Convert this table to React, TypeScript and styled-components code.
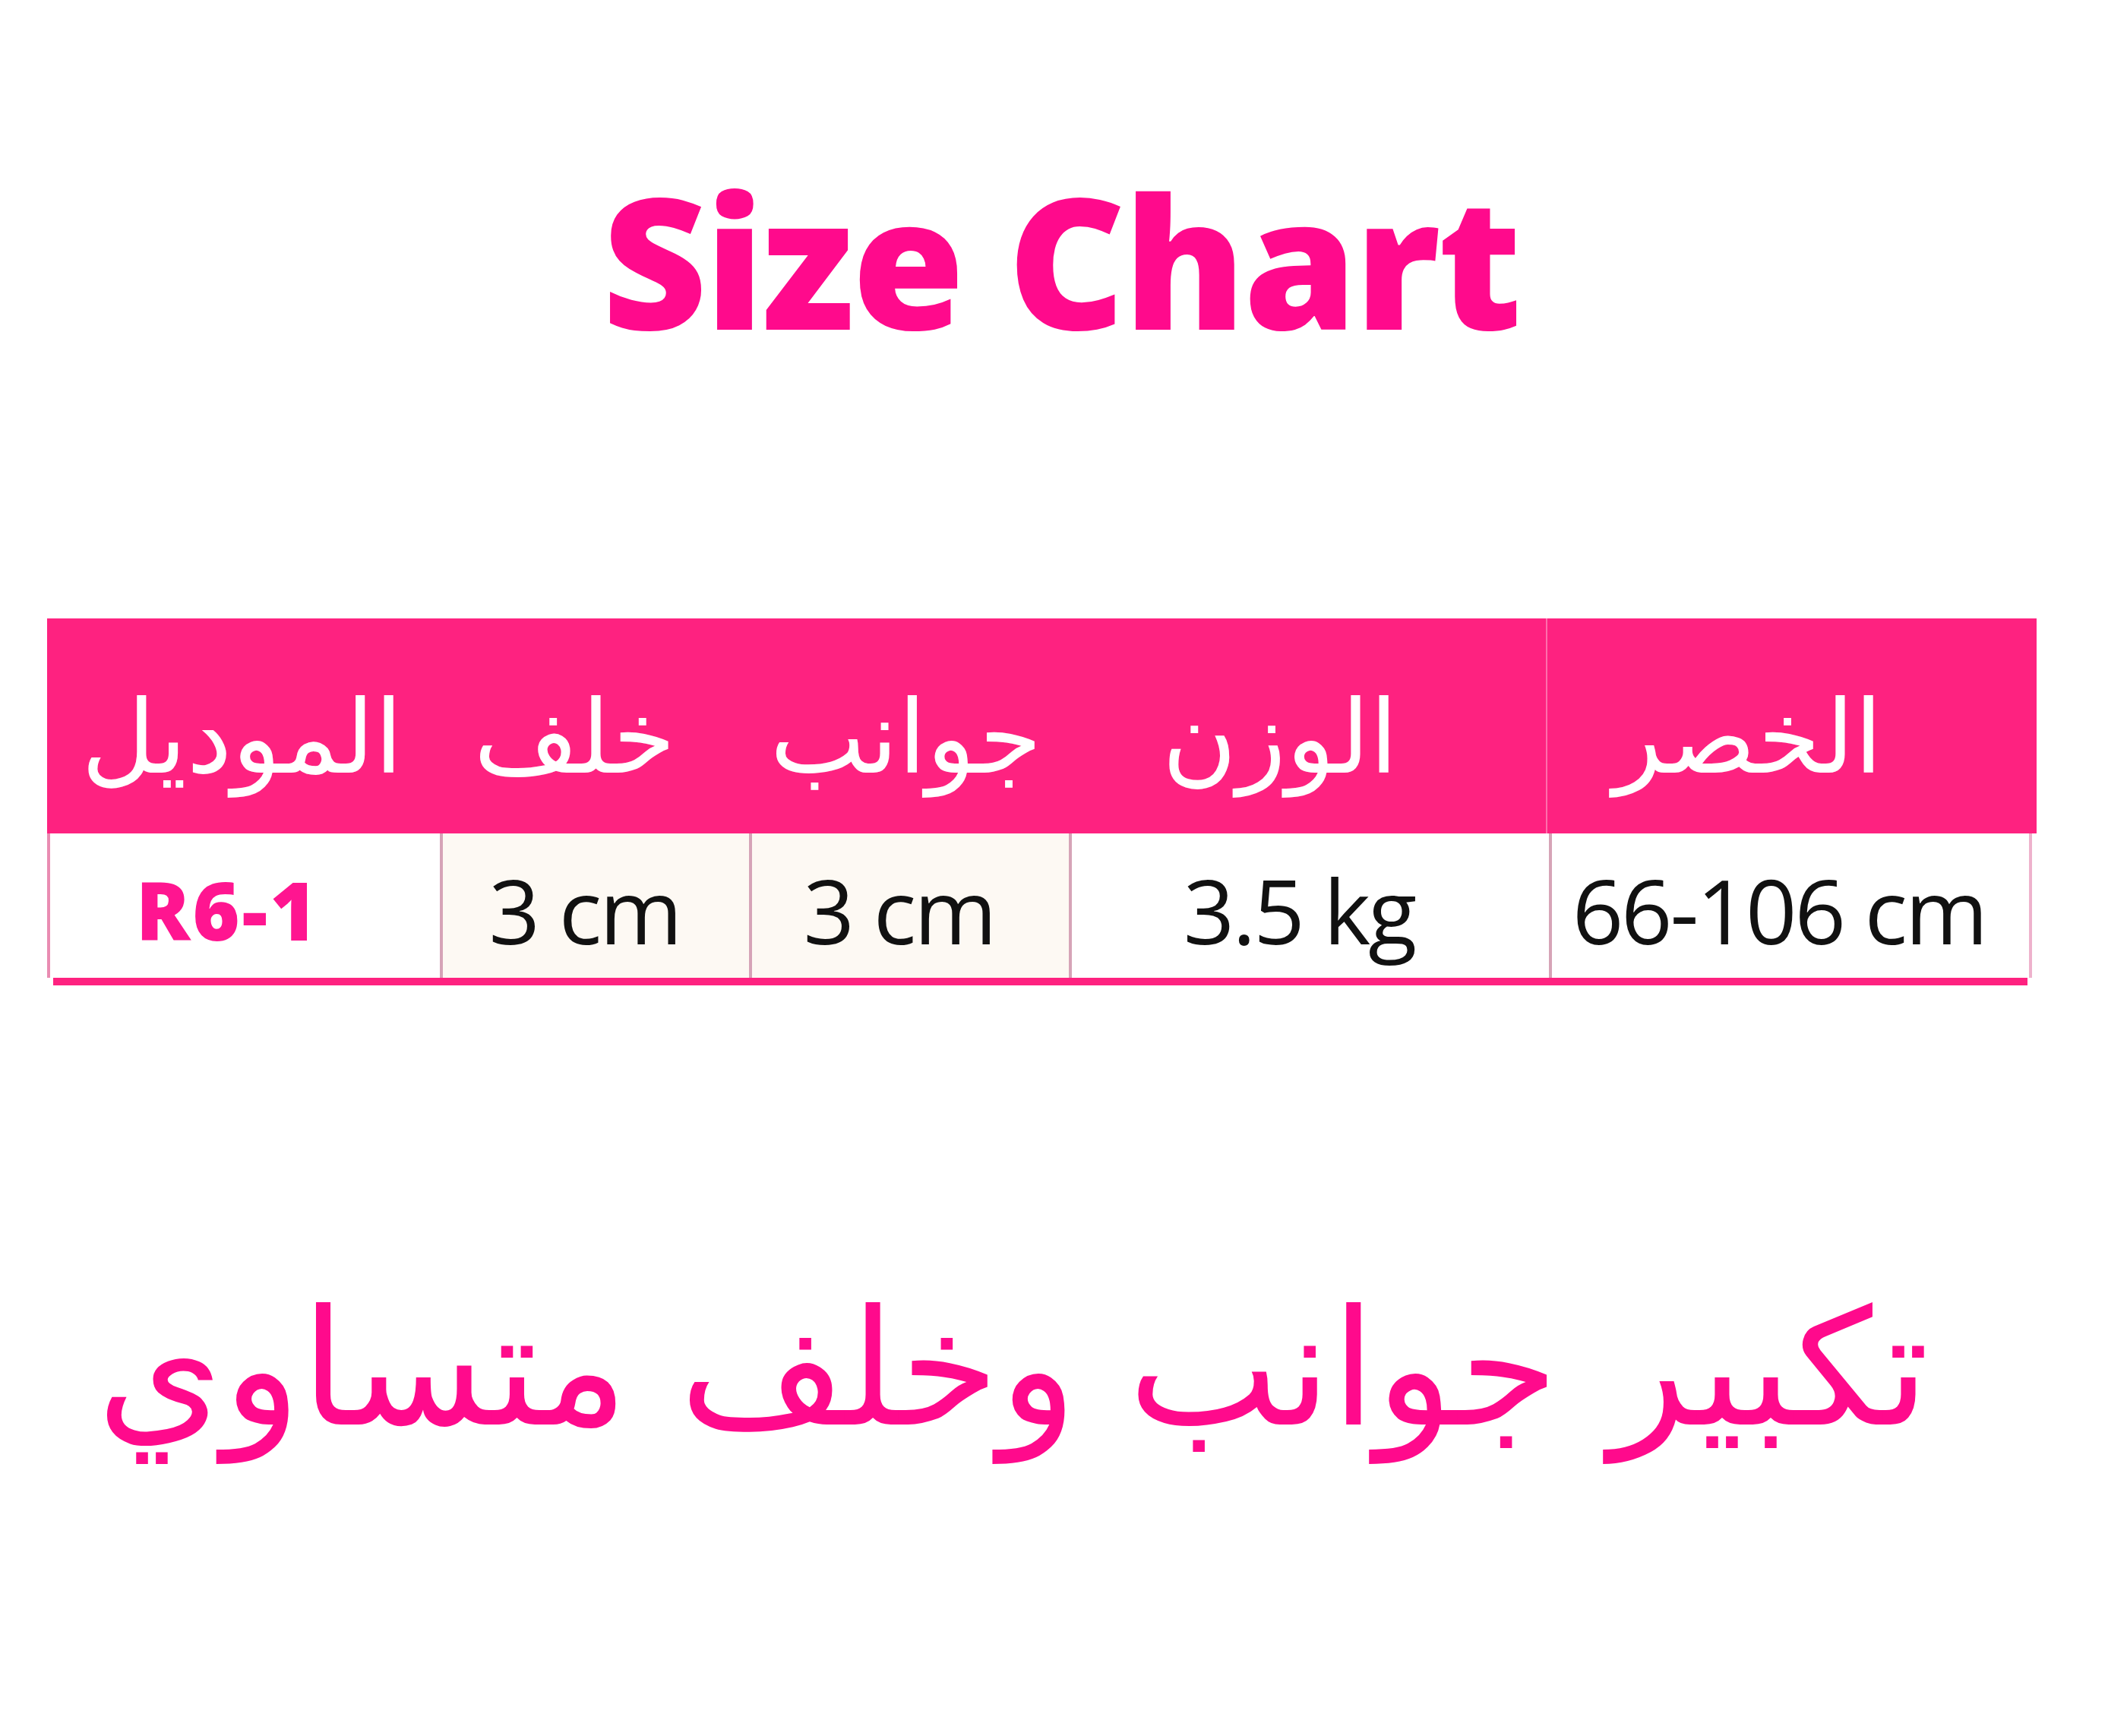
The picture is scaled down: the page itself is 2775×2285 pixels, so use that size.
import React from 'react';
import styled, { createGlobalStyle } from 'styled-components';

const PINK = '#fe2280';
const TEXT_PINK = '#ff0a8c';

const GlobalStyle = createGlobalStyle`
  html, body {
    margin: 0;
    padding: 0;
    background: #ffffff;
  }
`;

const Page = styled.div`
  width: 2775px;
  height: 2285px;
  background: #ffffff;
  display: flex;
  flex-direction: column;
  overflow: hidden;
`;

const Title = styled.h1`
  margin: 0;
  padding-top: 191px;
  padding-left: 18px;
  height: 814px;
  box-sizing: border-box;
  text-align: center;
  font-family: 'Open Sans', 'Noto Sans', sans-serif;
  font-weight: 800;
  font-size: 240px;
  line-height: 300px;
  letter-spacing: -3px;
  color: ${TEXT_PINK};
`;

const Table = styled.div`
  margin-left: 62px;
  width: 2619px;
  display: flex;
  flex-direction: column;
`;

const columns = '513px 407px 421px 632px 1fr';

const HeaderRow = styled.div`
  height: 283px;
  background: ${PINK};
  display: grid;
  grid-template-columns: ${columns};
`;

const HeaderCell = styled.div<{ $divider?: boolean; $shift?: number }>`
  display: flex;
  align-items: center;
  justify-content: center;
  padding-top: 30px;
  padding-right: ${(p) => (p.$shift ?? 0) * 2}px;
  border-left: ${(p) => (p.$divider ? '2px solid rgba(255,255,255,0.35)' : 'none')};
  font-family: 'DejaVu Sans', sans-serif;
  font-size: 134px;
  line-height: 1;
  color: #ffffff;
  direction: rtl;
`;

const BodyRow = styled.div`
  height: 190px;
  display: grid;
  grid-template-columns: ${columns};
  border-left: 4px solid #e98cb2;
  border-right: 4px solid #eeb2cc;
  margin-right: 6px;
  box-sizing: border-box;
`;

const BodyCell = styled.div<{ $cream?: boolean; $first?: boolean }>`
  display: flex;
  align-items: center;
  justify-content: center;
  padding-top: 10px;
  padding-right: ${(p) => (p.$first ? 46 : 30)}px;
  background: ${(p) => (p.$cream ? '#fdf9f3' : '#ffffff')};
  border-left: ${(p) => (p.$first ? 'none' : '4px solid #d6a4b7')};
  font-family: 'Open Sans', 'Noto Sans', sans-serif;
  font-size: 118px;
  letter-spacing: -3px;
  color: #111111;
`;

const ModelCode = styled.span`
  font-family: 'Open Sans', 'Noto Sans', sans-serif;
  font-weight: 800;
  font-size: 106px;
  letter-spacing: 3px;
  color: #ff1590;
`;

const BottomLine = styled.div`
  height: 10px;
  margin-left: 8px;
  margin-right: 12px;
  background: ${PINK};
`;

const Note = styled.p`
  margin: 0;
  margin-top: 378px;
  margin-left: 142px;
  width: 2398px;
  white-space: nowrap;
  text-align: center;
  direction: rtl;
  font-family: 'DejaVu Sans', sans-serif;
  font-size: 212px;
  line-height: 1.2;
  color: ${TEXT_PINK};
`;

const headers = [
  { label: 'الموديل' },
  { label: 'خلف', shift: 22 },
  { label: 'جوانب' },
  { label: 'الوزن', shift: 34 },
  { label: 'الخصر', shift: 58, divider: true },
];

const values = ['3 cm', '3 cm', '3.5 kg', '66-106 cm'];

export default function App() {
  return (
    <Page>
      <GlobalStyle />
      <Title>Size Chart</Title>
      <Table>
        <HeaderRow>
          {headers.map((h) => (
            <HeaderCell key={h.label} $divider={h.divider} $shift={h.shift}>
              {h.label}
            </HeaderCell>
          ))}
        </HeaderRow>
        <BodyRow>
          <BodyCell $first>
            <ModelCode>R6-1</ModelCode>
          </BodyCell>
          {values.map((v, i) => (
            <BodyCell key={i} $cream={i < 2}>
              {v}
            </BodyCell>
          ))}
        </BodyRow>
        <BottomLine />
      </Table>
      <Note>تكبير جوانب وخلف متساوي</Note>
    </Page>
  );
}
